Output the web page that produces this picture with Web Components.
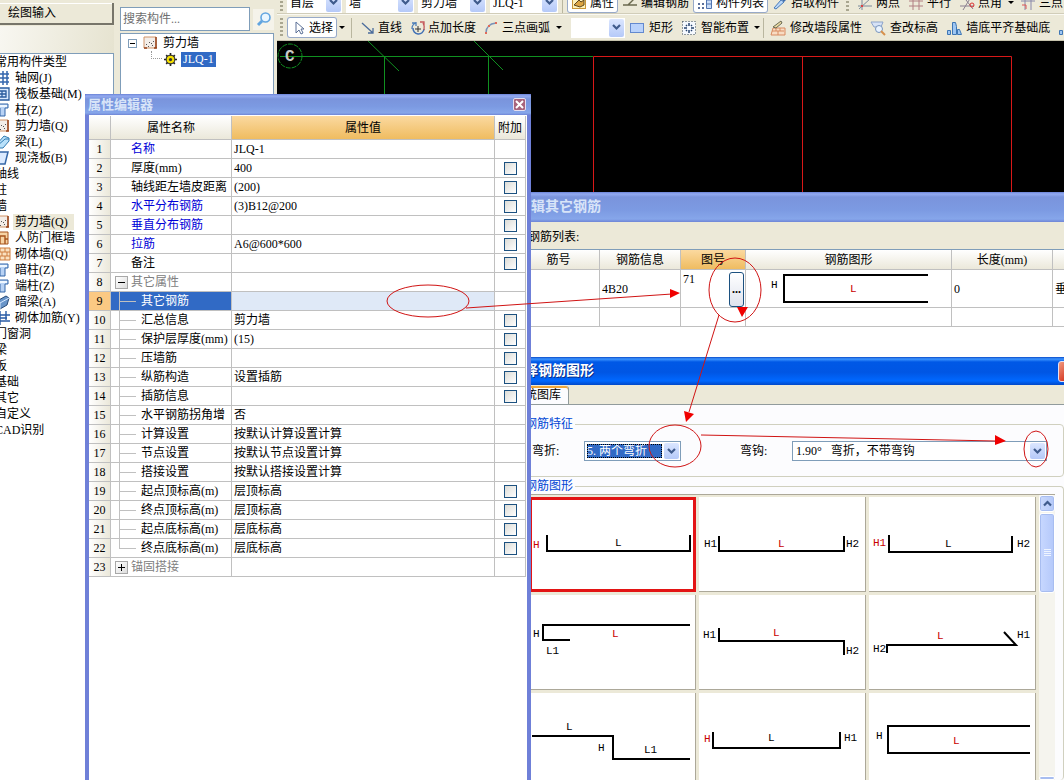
<!DOCTYPE html>
<html lang="zh-CN">
<head>
<meta charset="utf-8">
<title>属性编辑器</title>
<style>
html, body { margin: 0; height: 100%; }
body {
  font: 12px/16px "Liberation Serif", "Noto Sans CJK SC", sans-serif;
  color: #000; background: #ece9d8; overflow: hidden;
}
</style>
</head>
<body>
<cad-app></cad-app>
<script>
const BASE = `
  *, *::before, *::after { box-sizing: border-box; }
  button, input, select { font: inherit; color: inherit; margin: 0; }
  button { border: 0; padding: 0; background: none; white-space: nowrap; }
  svg { display: block; flex: none; }
`;

function component(name, render, after) {
  customElements.define(name, class extends HTMLElement {
    connectedCallback() {
      if (this.shadowRoot) return;
      const root = this.attachShadow({ mode: 'open' });
      const t = document.createElement('template');
      t.innerHTML = `<style>${BASE}</style>` + render(this);
      root.append(t.content.cloneNode(true));
      if (after) after(root, this);
    }
  });
}

const ICONS = {
  cursor: '<path d="M5 2v11l3-3 2 4 2-1-2-4h3z" fill="#fff" stroke="#5a6f96"/>',
  line: '<path d="M2 3l11 10M13 8v5h-5" fill="none" stroke="#4b6c9c" stroke-width="1.3"/>',
  pointlen: '<path d="M3 8a5.500 5.500 0 0 0 11 1" fill="none" stroke="#3f6fb5" stroke-width="1.5"/><path d="M2 9a6 6 0 0 1 4-6H2M6 2v4" fill="none" stroke="#4d7fb8" stroke-width="1.3"/><path d="M10 2h4v4M13 3q2 3 1 7" fill="none" stroke="#c4575a" stroke-width="1.3"/><path d="M5 9h6M8 6v6" stroke="#333"/>',
  arc: '<path d="M2 13Q2 4 12 3" fill="none" stroke="#7892b8" stroke-width="1.4"/><path d="M11 2h2v2h-2zM1 12h2v2H1zM4 5h2v2H4z" fill="#e06a5a"/>',
  rect: '<rect x="1.500" y="3.500" width="13" height="9" fill="#b9d2fb" stroke="#6389cf"/>',
  smart: '<rect x="1.500" y="1.500" width="13" height="13" fill="#f5f9ff" stroke="#345" stroke-dasharray="1 2"/><path d="M8 3v3M8 10v3M3 8h3M10 8h3M5 5l1 1M11 5l-1 1M5 11l1-1M11 11l-1-1" stroke="#26436d" stroke-width="1.5"/>',
  brick: '<path d="M3 8h12v7H1z" fill="#f8dcc3" stroke="#d88b60"/><path d="M2 11h12M6 8v3M10 8v3M8 11v4" stroke="#d88b60"/><path d="M3 7l8-6 1 2-6 5z" fill="#e8d9a0" stroke="#6b6a54"/>',
  inspect: '<path d="M1 2h12l-2 5H4z" fill="#d6e2f6" stroke="#8da4cb"/><circle cx="9" cy="9" r="3.500" fill="#e9f3ff" stroke="#7693bb"/><path d="M11 11l4 4" stroke="#d7904d" stroke-width="2"/>',
  align: '<path d="M1.500 14.500v-4h3v4zM6.500 14.500v-12h3l1 4v8zM11.500 14.500v-5h2l2 5z" fill="#9fc6f2" stroke="#3e76b5"/>',
  prop: '<rect x="1.500" y="1.500" width="13" height="12" fill="#fff2b8" stroke="#c99739"/><path d="M3 10l5-5 2 2 3-2v5l-4 2z" fill="#dca543" stroke="#5c461f"/>',
  editbar: '<path d="M1 10h5l6-6M6 10h9" fill="none" stroke="#6b6a4f" stroke-width="1.4"/>',
  list: '<path d="M9.500 1.500h5v12h-5z" fill="#c8dbf6" stroke="#5175b0"/><path d="M10 5h4M10 9h4" stroke="#5175b0"/><path d="M1 8h2v2H1zM5 8h2v2H5zM1 12h2v2H1zM5 12h2v2H5z" fill="#5a6f9a"/>',
  picker: '<path d="M2 13l7-8 3 2-8 7z" fill="#b9d6f8" stroke="#487ab8"/><path d="M9 4l3-3 3 3-3 3z" fill="#3d6cae"/>',
  twopt: '<path d="M1 11h14M5 1v14M2 14L14 3" fill="none" stroke="#7a8a9a"/><path d="M4 10h2v2H4z" fill="#d44"/>',
  para: '<path d="M1 6h14M1 11h14M5 1v14M11 1v14" stroke="#b17f82"/>',
  angle: '<path d="M1 11h14M4 15L12 2M7 5l7 9" fill="none" stroke="#8a7f90"/><circle cx="13" cy="10" r="2" fill="none" stroke="#d33"/>',
  threept: '<path d="M1 6h14M5 2v13M11 2v13" stroke="#88a"/><path d="M2 10h4v4" fill="none" stroke="#d55"/>',
  search: '<circle cx="9.500" cy="6.500" r="4.500" fill="#eaf6ff" stroke="#62a5e0" stroke-width="1.600"/><path d="M6 10l-4 4" stroke="#62a5e0" stroke-width="3"/>',
  axis: '<path d="M1 4h13M1 8h13M1 12h13M4 1v14M8 1v14M12 1v14" stroke="#3567ae" stroke-width="1.500"/>',
  raft: '<path d="M1 2h13v12H1zM4 5h7v6H4zM7 5v6M4 8h7" fill="#d8e9ff" stroke="#285b9e" stroke-width="1.300"/>',
  column: '<path d="M0 2h13v4h-3v8H5V6H0z" fill="#b8d2f4" stroke="#3567a8"/><path d="M1 3h11v2H1z" fill="#eff7ff"/>',
  wall: '<path d="M1 2h12v11H1z" fill="#f3ede8" stroke="#d09468"/><path d="M3 9h1v1H3zM6 7h1v1H6zM9 10h1v1H9zM5 11h1v1H5zM10 6h1v1h-1zM8 8h1v1H8z" fill="#555"/><path d="M13 2v11M1 13h3M11 13h3" stroke="#96421b" stroke-width="1.500"/>',
  beam: '<path d="M1 11l8-9 5 2v3l-6 7H1z" fill="#b9e1fa" stroke="#317bb1"/><path d="M2 12l8-7h4" fill="none" stroke="#317bb1"/>',
  slab: '<path d="M1 2h12l-3 12H2z" fill="#dbeaff" stroke="#3567a8" stroke-width="1.500"/>',
  doorwall: '<path d="M1 2h12v12H1z" fill="#f7d3a4" stroke="#a6531c"/><path d="M5 14V6h5v8M1 6h4M10 9h3" fill="none" stroke="#a6531c" stroke-width="1.400"/>',
  masonry: '<path d="M1 2h14v12H1zM1 6h14M1 10h14M5 2v4M10 2v4M7 6v4M12 6v4M5 10v4M10 10v4" fill="#fae1c0" stroke="#cd7d3f"/>',
  darkbeam: '<path d="M2 7l9-5 3 2-2 7-7 4z" fill="#6995c9" stroke="#274976"/><path d="M2 7l3 2 9-5M5 9v6" fill="none" stroke="#d6e8ff"/>',
  rebar: '<path d="M1 5h14M1 11h14M5 1v14M11 1v9M3 8h9" fill="none" stroke="#285ba5" stroke-width="1.400"/>',
  gear: '<path d="M6 0v12M0 6h12M2 2l8 8M10 2l-8 8" stroke="#222" stroke-width="1.500"/><circle cx="6" cy="6" r="4" fill="#f5e000" stroke="#333"/><circle cx="6" cy="6" r="1.500" fill="#333"/>'
};
const icon = (name, size = 16) =>
  `<svg width="${size}" height="${size}" viewBox="0 0 16 16" aria-hidden="true">${ICONS[name]}</svg>`;

/* Toolbar parts */
component('tool-item', el => `
  <style>
    :host { display: block; flex: none; }
    button { display: flex; align-items: center; height: 21px; padding: 0 4px; gap: var(--tool-gap, 3px); }
    :host([pressed]) button { background: #fff; border-radius: 3px; box-shadow: inset 0 0 0 1px #98aac8; }
  </style>
  <button type="button">${icon(el.getAttribute('icon'))}<slot></slot></button>`);

component('tool-caret', () => `
  <style>
    :host { display: block; flex: none; width: 10px; }
    button { display: block; width: 100%; height: 16px; }
    i { display: block; margin: auto; width: 0; border: 3px solid transparent; border-top-color: #000; border-bottom: 0; }
  </style>
  <button type="button" aria-label="更多"><i></i></button>`);

component('tool-grip', () => `
  <style>:host { display: block; flex: none; width: 3px; height: 20px; margin: 0 4px 0 3px;
    background: repeating-linear-gradient(#a9a690 0 2px, transparent 2px 4px); }</style>`);

component('tool-sep', () => `
  <style>:host { display: block; flex: none; width: 1px; height: 20px; margin: 0 4px; background: #b9b69f; }</style>`);

component('combo-box', el => `
  <style>
    :host { display: block; flex: none; position: relative; height: 20px; background: #fff; }
    :host([framed]) { border: 1px solid #7f9db9; }
    select { appearance: none; display: block; width: 100%; height: 100%; border: 0; border-radius: 0;
      padding: 0 18px 0 3px; background: none; outline: 0; line-height: 16px; }
    .face { position: absolute; right: 1px; top: 1px; bottom: 1px; width: 15px; display: grid; place-items: center;
      pointer-events: none; border-radius: 2px; background: linear-gradient(#dbe6ff, #b5c9f8); }
    :host([chosen]) select { margin: 2px; height: 14px; width: calc(100% - 20px); padding: 0;
      background: #316ac5; color: #fff; line-height: 14px; outline: 1px dotted #000; outline-offset: -1px; }
  </style>
  <select aria-label="${el.getAttribute('label')}"><option>${el.getAttribute('value') || ''}</option></select>
  <span class="face"><svg width="9" height="7" viewBox="0 0 9 7"><path d="M1 1l3.500 3.500L8 1" fill="none" stroke="#3f5b8c" stroke-width="2.200"/></svg></span>`);

component('tool-bars', () => `
  <style>
    :host { display: block; height: 41px; overflow: hidden; background: #ece9d8; }
    .bar { display: flex; align-items: center; }
    .top { height: 22px; margin-top: -8px; border-bottom: 1px solid #d1cdb9; }
    .low { height: 27px; border-top: 1px solid #faf9f2; border-bottom: 1px solid #c6c2ad; }
    .combos { display: flex; gap: 4px; }
    .draw { display: flex; align-items: center; --tool-gap: 2px; }
    .edit { display: flex; align-items: center; --tool-gap: 4px; }
    .edit tool-caret { width: 8px; }
    .edit tool-sep { margin: 0 2px; }
    .w55 { width: 55px; } .w68 { width: 68px; }
    .kind { width: 54px; margin-left: 7px; }
  </style>
  <div class="bar top">
    <tool-grip></tool-grip>
    <div class="combos">
      <combo-box class="w55" label="楼层" value="首层"></combo-box>
      <combo-box class="w68" label="构件类别" value="墙"></combo-box>
      <combo-box class="w68" label="构件类型" value="剪力墙"></combo-box>
      <combo-box class="w68" label="构件" value="JLQ-1"></combo-box>
    </div>
    <tool-sep></tool-sep>
    <tool-item icon="prop" pressed>属性</tool-item>
    <tool-item icon="editbar">编辑钢筋</tool-item>
    <tool-item icon="list" pressed>构件列表</tool-item>
    <tool-item icon="picker">拾取构件</tool-item>
    <tool-grip></tool-grip>
    <tool-item icon="twopt">两点</tool-item>
    <tool-item icon="para">平行</tool-item>
    <tool-item icon="angle">点角</tool-item>
    <tool-caret></tool-caret>
    <tool-item icon="threept">三点</tool-item>
  </div>
  <div class="bar low">
    <tool-grip></tool-grip>
    <div class="draw">
      <tool-item icon="cursor" pressed>选择</tool-item><tool-caret></tool-caret>
      <tool-sep></tool-sep>
      <tool-item icon="line">直线</tool-item>
      <tool-item icon="pointlen">点加长度</tool-item>
      <tool-item icon="arc">三点画弧</tool-item><tool-caret></tool-caret>
      <combo-box class="kind" label="画法"></combo-box>
    </div>
    <div class="edit">
      <tool-item icon="rect">矩形</tool-item>
      <tool-item icon="smart">智能布置</tool-item><tool-caret></tool-caret>
      <tool-sep></tool-sep>
      <tool-item icon="brick">修改墙段属性</tool-item>
      <tool-item icon="inspect">查改标高</tool-item>
      <tool-item icon="align">墙底平齐基础底</tool-item>
      <tool-item icon="align"></tool-item>
    </div>
  </div>`);

/* Left navigation */
const NAV = [
  ['常用构件类型'], ['轴网(J)', 'axis'], ['筏板基础(M)', 'raft'], ['柱(Z)', 'column'], ['剪力墙(Q)', 'wall'],
  ['梁(L)', 'beam'], ['现浇板(B)', 'slab'], ['轴线'], ['柱'], ['墙'], ['剪力墙(Q)', 'wall', 1],
  ['人防门框墙', 'doorwall'], ['砌体墙(Q)', 'masonry'], ['暗柱(Z)', 'column'], ['端柱(Z)', 'column'],
  ['暗梁(A)', 'darkbeam'], ['砌体加筋(Y)', 'rebar'], ['门窗洞'], ['梁'], ['板'], ['基础'], ['其它'], ['自定义'], ['CAD识别']
];
component('nav-panel', () => `
  <style>
    :host { display: flex; flex-direction: column; margin-right: 5px; overflow: hidden; }
    .tab { height: 22px; margin-top: 3px; padding-left: 8px; text-align: left; flex: none;
      background: #ece9d8; border: solid #77756a; border-width: 0 2px 2px 0; box-shadow: inset 0 1px #fff; }
    .strip { flex: none; height: 27px; margin-top: 1px; background: linear-gradient(100deg, #f8f7f1, #e6e3d0); }
    ul { flex: 1; margin: 0; padding: 0; list-style: none; background: #fff; overflow: hidden;
      border: solid #7f9db9; border-width: 1px 1px 0 0; }
    li { height: 16px; margin-left: -5px; display: flex; }
    li button { display: flex; align-items: center; height: 16px; line-height: 16px; }
    li svg { margin-right: 2px; }
    .leaf span { padding: 0 6px 0 2px; }
    .on span { background: #ece9d8; }
  </style>
  <button class="tab" type="button">绘图输入</button>
  <div class="strip"></div>
  <ul>${NAV.map(([t, i, on]) => i
    ? `<li class="leaf ${on ? 'on' : ''}"><button type="button">${icon(i)}<span>${t}</span></button></li>`
    : `<li><button type="button">${t}</button></li>`).join('')}</ul>`);

component('part-tree', () => `
  <style>
    :host { display: flex; flex-direction: column; padding: 7px 3px 0 1px; }
    form { display: flex; gap: 3px; margin-bottom: 2px; align-items: center; }
    input { flex: 1; min-width: 0; height: 24px; border: 1px solid #7f9db9; padding: 0 2px; background: #fff; outline: 0; }
    input::placeholder { color: #6f6f6f; opacity: 1; }
    form button { width: 21px; height: 21px; display: grid; place-items: center; background: #f5f3ea; }
    .tree { flex: 1; background: #fff; border: 1px solid #7f9db9; padding: 1px 0 0 7px; }
    .row { display: flex; align-items: center; height: 16px; }
    .exp { width: 9px; height: 9px; border: 1px solid #7f9db9; display: grid; place-items: center; margin-right: 6px; }
    .exp::before { content: ""; width: 5px; height: 1px; background: #000; }
    .row span { margin-left: 4px; }
    .twig { width: 11px; height: 8px; margin: 0 2px 8px 23px; border: dotted #999; border-width: 0 0 1px 1px; }
    .row .on { background: #316ac5; color: #fff; padding: 0 2px; line-height: 15px; margin-left: 4px; }
  </style>
  <form><input type="text" placeholder="搜索构件..." aria-label="搜索构件"><button type="button" aria-label="搜索">${icon('search')}</button></form>
  <div class="tree">
    <div class="row"><button class="exp" type="button" aria-label="折叠"></button>${icon('wall')}<span>剪力墙</span></div>
    <div class="row"><i class="twig"></i><svg width="13" height="13" viewBox="0 0 12 12">${ICONS.gear}</svg><span class="on">JLQ-1</span></div>
  </div>`);

component('drawing-canvas', () => `
  <style>
    :host { display: block; background: #000; overflow: hidden; }
    text { font: bold 16px "Liberation Mono", monospace; fill: #c8c8c8; }
  </style>
  <svg width="787" height="160" fill="none">
    <g stroke="#109020">
      <circle cx="13" cy="15" r="12" stroke-dasharray="5 1"/>
      <path d="M3 15.500H316M107.500 16V160M211.500 16V160M91 0l31 30M197 0l29 29"/>
    </g>
    <path d="M316.500 160V15.500H734.500V160M525.500 15V160" stroke="#d81818"/>
    <text x="8" y="20">C</text>
  </svg>`);

/* Floating windows */
component('xp-window', el => `
  <style>
    :host { position: absolute; bottom: 0; display: flex; flex-direction: column; overflow: hidden;
      background: #6f80d8; padding: 0 4px; }
    header { flex: none; margin: 0 -4px; padding: 0 5px 0 3px; height: var(--bar, 28px); display: flex; align-items: center;
      justify-content: space-between; background: linear-gradient(#6a83d6, #93aaf0 2px, #7a94dc 5px, #7c9ae2 60%, #86a6ea 90%, #6f85d6);
      color: #d8e4f8; font-weight: bold; font-size: var(--bar-font, 14px); border-radius: 3px 3px 0 0; }
    h2 { margin: 0; font: inherit; line-height: 20px; white-space: nowrap; }
    :host([active]) { background: #0a50dc; }
    :host([active]) header { color: #fff; background: linear-gradient(#0a4bc8, #3d95ff 2px, #0058e6 5px, #0056e4 55%, #0068ff 85%, #0148c8); text-shadow: 1px 1px #0a2f8a; }
    header button { width: var(--x, 13px); height: var(--x, 13px); display: grid; place-items: center;
      border: 1px solid #e5dff0; border-radius: 2px; background: #a8647c; }
    :host([active]) header button { background: linear-gradient(135deg, #f09a80, #d8402a 60%, #c03818); border-radius: 3px; }
    .body { flex: 1; min-height: 0; display: flex; flex-direction: column; background: #fff; }
  </style>
  <header><h2>${el.getAttribute('caption')}</h2>
    <button type="button" aria-label="关闭"><svg width="9" height="9" viewBox="0 0 9 9"><path d="M1 1l7 7M8 1L1 8" stroke="#fff" stroke-width="2"/></svg></button></header>
  <div class="body"><slot></slot></div>`);

/* kind: b = blue property, g = group, c = child, l = last child */
const PROPS = [
  ['名称', 'JLQ-1', 'b', 0], ['厚度(mm)', '400', '', 1], ['轴线距左墙皮距离', '(200)', '', 1], ['水平分布钢筋', '(3)B12@200', 'b', 1],
  ['垂直分布钢筋', '', 'b', 1], ['拉筋', 'A6@600*600', 'b', 1], ['备注', '', '', 1], ['其它属性', '', 'g open', 0],
  ['其它钢筋', '', 'c sel', 0], ['汇总信息', '剪力墙', 'c', 1], ['保护层厚度(mm)', '(15)', 'c', 1], ['压墙筋', '', 'c', 1],
  ['纵筋构造', '设置插筋', 'c', 1], ['插筋信息', '', 'c', 1], ['水平钢筋拐角增', '否', 'c', 0], ['计算设置', '按默认计算设置计算', 'c', 0],
  ['节点设置', '按默认节点设置计算', 'c', 0], ['搭接设置', '按默认搭接设置计算', 'c', 0], ['起点顶标高(m)', '层顶标高', 'c', 1],
  ['终点顶标高(m)', '层顶标高', 'c', 1], ['起点底标高(m)', '层底标高', 'c', 1], ['终点底标高(m)', '层底标高', 'c l', 1], ['锚固搭接', '', 'g', 0]
];
component('property-grid', () => `
  <style>
    :host { display: block; padding: 1px 1px 0 0; }
    table { width: 100%; table-layout: fixed; border-collapse: separate; border-spacing: 0; }
    th, td { height: 19px; line-height: 16px; padding: 0; border: solid #c0c0c0; border-width: 0 1px 1px 0; font-weight: normal; white-space: nowrap; overflow: hidden; }
    thead th { height: 24px; background: linear-gradient(#fff, #ebe8da); }
    thead .hot { background: linear-gradient(#fbd9a0, #efbc60); }
    tbody th { background: linear-gradient(90deg, #fff, #ebe8da); }
    .name { padding-left: 20px; }
    .val { padding-left: 2px; }
    .b .name { color: #0000d8; }
    .g .name { color: #808080; padding-left: 4px; }
    .g div { display: flex; align-items: center; gap: 3px; }
    .g button { width: 13px; height: 13px; border: 1px solid #a8a8a8; background: linear-gradient(135deg, #fff, #ddd); display: grid; place-items: center; color: #000; }
    .c .name { padding-left: 30px;
      background: linear-gradient(#c0c0c0, #c0c0c0) 8px 0 / 1px 100% no-repeat, linear-gradient(#c0c0c0, #c0c0c0) 8px 9px / 17px 1px no-repeat; }
    .l .name { background-size: 1px 9px, 17px 1px; }
    .sel .name { background-color: #316ac5; color: #fff; }
    .sel .val { background: #dfe9f7; }
    .sel th { background: #fbc983; }
    .add { text-align: center; }
    input { appearance: none; display: block; margin: 0 auto; width: 13px; height: 13px; border: 1px solid #1c5180; background: linear-gradient(135deg, #dcdcd7, #fff); }
  </style>
  <table>
    <colgroup><col style="width:22px"><col style="width:121px"><col><col style="width:31px"></colgroup>
    <thead><tr><th></th><th>属性名称</th><th class="hot">属性值</th><th>附加</th></tr></thead>
    <tbody>${PROPS.map(([n, v, k, a], i) => `
      <tr class="${k}"><th>${i + 1}</th>
      <td class="name">${k[0] === 'g' ? `<div><button type="button" aria-label="展开或折叠"><svg width="7" height="7"><path d="M0 3.500h7${k === 'g' ? 'M3.500 0v7' : ''}" stroke="#000"/></svg></button>${n}</div>` : n}</td>
      <td class="val">${v}</td>
      <td class="add">${a ? `<input type="checkbox" aria-label="附加 ${n}">` : ''}</td></tr>`).join('')}
    </tbody>
  </table>`);

const LABEL = 'text { font: 11px "Liberation Mono", monospace; } .r { fill: #c80000; } path { fill: none; stroke: #000; stroke-width: 2; }';

component('rebar-list', () => `
  <style>
    :host { display: flex; flex-direction: column; flex: 1; background: #ece9d8; }
    .cap { height: 27px; padding: 7px 0 0 10px; flex: none; }
    .sheet { flex: 1; background: #fff; border-top: 1px solid #7f9db9; }
    table { width: 100%; table-layout: fixed; border-collapse: separate; border-spacing: 0; }
    th, td { padding: 0 0 0 2px; border: solid #c0c0c0; border-width: 0 1px 1px 0; font-weight: normal; text-align: left; white-space: nowrap; overflow: hidden; }
    th { height: 20px; padding: 0; text-align: center; background: linear-gradient(#fff, #ebe8da); }
    th.hot { background: linear-gradient(#fbd9a0, #efbc60); }
    .tall td { height: 38px; } .short td { height: 19px; }
    td.fig { padding: 0; }
    .no div { display: flex; justify-content: space-between; height: 36px; padding-right: 1px; }
    .no button { width: 15px; height: 35px; border: 1px solid #1c5180; border-radius: 3px; background: linear-gradient(#fff, #dfe3ee); font-weight: bold; margin-top: 1px; }
    ${LABEL}
  </style>
  <div class="cap">钢筋列表:</div>
  <div class="sheet"><table>
    <colgroup><col style="width:82px"><col style="width:81px"><col style="width:65px"><col style="width:206px"><col style="width:101px"><col></colgroup>
    <thead><tr><th>筋号</th><th>钢筋信息</th><th class="hot">图号</th><th>钢筋图形</th><th>长度(mm)</th><th></th></tr></thead>
    <tbody>
      <tr class="tall"><td></td><td>4B20</td><td class="no"><div>71<button type="button" aria-label="选择图号">...</button></div></td>
        <td class="fig"><svg width="205" height="37"><path d="M182 5H38V32H182"/><text x="25" y="18">H</text><text class="r" x="104" y="22">L</text></svg></td>
        <td>0</td><td>垂</td></tr>
      <tr class="short"><td></td><td></td><td></td><td></td><td></td><td></td></tr>
    </tbody></table></div>`);

/* Path, then labels; a star marks the red one */
const SHAPES = [
  ['M18 38V54H161V38', 'H*4,51 L86,49'],
  ['M20 39V54H145V39', 'H1 5,50 L*79,50 H2 147,50'],
  ['M20 38V55H143V39', 'H1*4,49 L76,50 H2 148,50'],
  ['M161 30H14V45H41', 'H4,42 L*83,42 L1 17,59'],
  ['M20 33V46H145V60', 'H1 4,43 L*74,41 H2 147,59'],
  ['M18 58V50H147L135 37', 'H2 4,57 L*68,44 H1 148,43'],
  ['M3 43H84V66H161', 'L37,37 H69,58 L1 115,60'],
  ['M14 39V55H141V39', 'H*5,49 L69,48 H1 145,48'],
  ['M161 33H19V60H161', 'H7,46 L*84,51']
];
const labels = s => [...s.matchAll(/([HL])([12](?= |\*))?(\*)? ?(\d+),(\d+)/g)]
  .map(m => `<text x="${m[4]}" y="${m[5]}"${m[3] ? ' class="r"' : ''}>${m[1]}${m[2] || ''}</text>`).join('');

component('shape-tile', el => {
  const [d, t] = SHAPES[+el.getAttribute('index')];
  return `
  <style>
    :host { display: block; height: 95px; background: #fff; border: solid #aca899; border-width: 0 1px 1px 0; overflow: hidden; }
    :host([selected]) { border: 0; box-shadow: inset 0 0 0 3px #e31414; }
    button { display: block; width: 100%; height: 100%; }
    svg { height: 100%; }
    ${LABEL}
  </style>
  <button type="button" aria-label="钢筋图形"><svg width="166">
    <path d="${d}"/>${labels(t)}</svg></button>`;
});

component('scroll-rail', () => `
  <style>
    :host { display: flex; flex-direction: column; justify-content: space-between; width: 16px; background: #f5f4ee; }
    button { display: grid; place-items: center; width: 16px; height: 17px; border: 1px solid #fff; border-radius: 3px; background: linear-gradient(90deg, #cbdafd, #b4c8f8); box-shadow: inset 0 0 0 1px #a8bdf0; }
    .thumb { height: 80px; margin-top: 1px; background: linear-gradient(90deg, #c8d8ff, #b4c8fa); }
    .down { height: 4px; }
  </style>
  <div>
    <button type="button" aria-label="向上"><svg width="9" height="7" viewBox="0 0 9 7"><path d="M1 5.500l3.500-3.500L8 5.500" fill="none" stroke="#3f5b8c" stroke-width="2.200"/></svg></button>
    <button class="thumb" type="button" aria-label="滚动"><svg width="7" height="8"><path d="M0 .5h7M0 2.500h7M0 4.500h7M0 6.500h7" stroke="#eef4ff"/></svg></button>
  </div>
  <button class="down" type="button" aria-label="向下"></button>`);

component('shape-picker', () => `
  <style>
    :host { display: flex; flex-direction: column; flex: 1; min-height: 0; background: #ece9d8; }
    .tab { flex: none; width: 58px; height: 18px; margin: 1px 0 0; padding-left: 2px; text-align: left; background: #fcfcfe;
      border: 1px solid #919b9c; border-width: 0 1px 0 0; box-shadow: inset 0 2px #f0a83c; border-radius: 0 3px 0 0; }
    .page { flex: 1; min-height: 0; display: flex; flex-direction: column; background: #fcfcfe; border-top: 1px solid #919b9c; padding: 11px 16px 0 4px; }
    fieldset { margin: 0; min-width: 0; border: 1px solid #d0d0bf; border-radius: 4px; padding: 0; }
    legend { color: #0046d5; line-height: 16px; padding: 0 2px 0 0; margin-left: 9px; }
    .opts { height: 61px; margin-bottom: 1px; flex: none; }
    .row { display: flex; align-items: center; padding: 9px 16px 0; }
    label { flex: none; width: 52px; }
    .bend { width: 97px; margin-right: 59px; }
    .hook { flex: 1; }
    .gallery { flex: 1; min-height: 0; border-bottom: 0; }
    .view { display: flex; gap: 1px; height: 100%; margin-right: 8px; border-top: 1px solid #aca899; background: #ece9d8; overflow: hidden; }
    .tiles { flex: 1; display: grid; grid-template-columns: repeat(3, 1fr); gap: 3px; padding: 2px 2px 0 13px; align-content: start; }
  </style>
  <button class="tab" type="button">系统图库</button>
  <div class="page">
    <fieldset class="opts"><legend>钢筋特征</legend>
      <div class="row">
        <label>弯折:</label><combo-box class="bend" framed chosen label="弯折" value="5. 两个弯折"></combo-box>
        <label>弯钩:</label><combo-box class="hook" framed label="弯钩" value="1.90°&nbsp;&nbsp;&nbsp;弯折，不带弯钩"></combo-box>
      </div></fieldset>
    <fieldset class="gallery"><legend>钢筋图形</legend>
      <div class="view"><div class="tiles">${SHAPES.map((_, i) => `<shape-tile index="${i}"${i ? '' : ' selected'}></shape-tile>`).join('')}</div><scroll-rail></scroll-rail></div>
    </fieldset>
  </div>`);

component('guide-marks', () => `
  <style>:host { position: absolute; inset: 0; pointer-events: none; overflow: hidden; }</style>
  <svg width="1064" height="780" fill="none" stroke="#d01414">
    <ellipse cx="428" cy="301" rx="41" ry="16"/><path d="M466 308L672 294"/>
    <ellipse cx="735" cy="290" rx="26" ry="32"/><path d="M719 315L689 412"/>
    <ellipse cx="675" cy="446" rx="26" ry="21"/><path d="M701 435L996 441"/>
    <ellipse cx="1036" cy="449" rx="12" ry="18"/>
    <path fill="#f00000" stroke="none" d="M670 289l10 4-10 5zM737 307h11l-6 10zM684 411l10 3-8 8zM995 435l11 6-11 4z"/>
  </svg>`);

component('cad-app', () => `
  <style>
    :host { position: relative; display: grid; grid-template-columns: 119px 158px 1fr; height: 100vh; overflow: hidden; background: #ece9d8; }
    .stage { display: flex; flex-direction: column; min-width: 0; overflow: hidden; }
    drawing-canvas { flex: 1; }
    .props { left: 85px; top: 94px; width: 446px; --bar: 21px; --bar-font: 13px; }
    .rebar { left: 514px; right: -60px; top: 192px; --bar: 30px; }
    .shapes { left: 507px; right: -20px; top: 357px; --bar: 28px; --x: 21px; }
  </style>
  <nav-panel></nav-panel>
  <part-tree></part-tree>
  <div class="stage"><tool-bars></tool-bars><drawing-canvas></drawing-canvas></div>
  <xp-window class="rebar" caption="编辑其它钢筋"><rebar-list></rebar-list></xp-window>
  <xp-window class="shapes" active caption="选择钢筋图形"><shape-picker></shape-picker></xp-window>
  <xp-window class="props" caption="属性编辑器"><property-grid></property-grid></xp-window>
  <guide-marks></guide-marks>`);
</script>
</body>
</html>
